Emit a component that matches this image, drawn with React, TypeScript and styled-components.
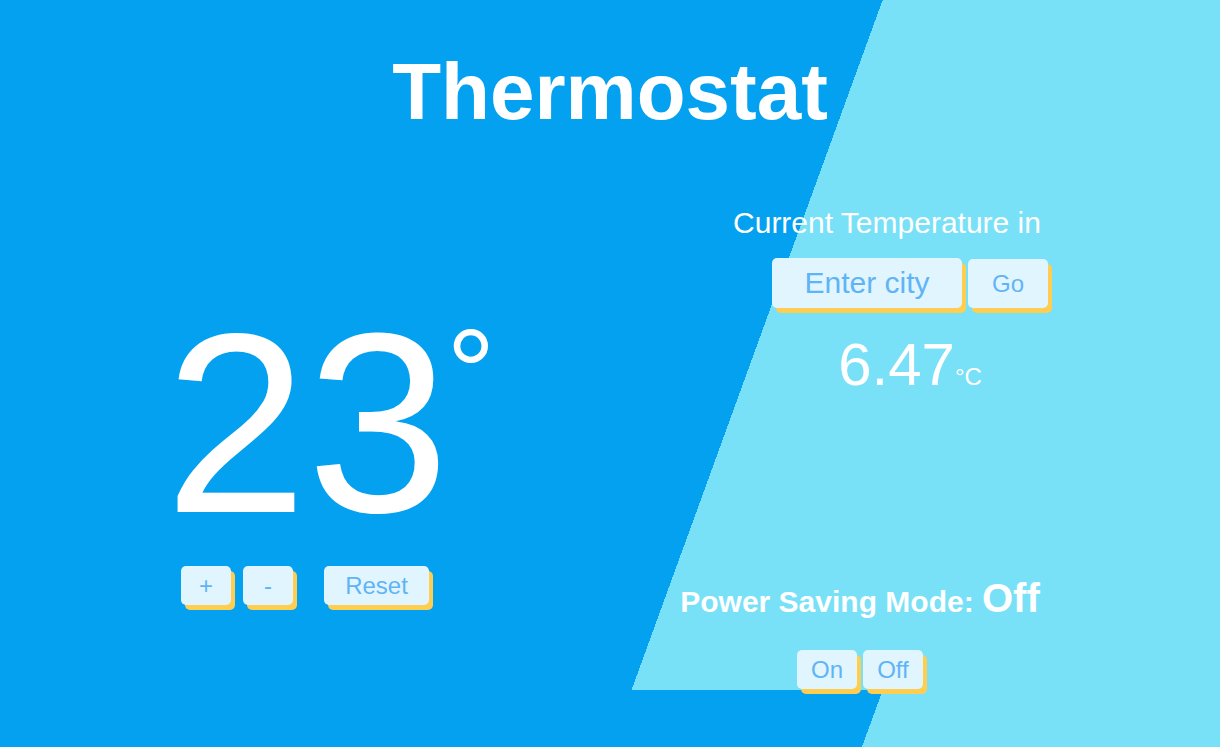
import React from "react";
import styled, { createGlobalStyle } from "styled-components";

const GlobalStyle = createGlobalStyle`
  html, body, #root {
    margin: 0;
    padding: 0;
    height: 100%;
  }
  body {
    font-family: "Liberation Sans", Arial, sans-serif;
  }
`;

const BLUE = "#03a1ef";
const CYAN = "#78e1f7";
const BTN_BG = "#e1f5fe";
const BTN_TEXT = "#5fb4f7";
const SHADOW = "#ffcd50";

const Page = styled.div`
  min-height: 100vh;
  background: linear-gradient(110deg, ${BLUE} 76%, ${CYAN} 76%);
`;

const Panel = styled.main`
  height: 690px;
  display: flex;
  flex-direction: column;
  color: #fff;
  background: linear-gradient(110deg, ${BLUE} 60%, ${CYAN} 60%);
`;

const Title = styled.h1`
  margin: 52px 0 0;
  font-size: 80px;
  line-height: 1;
  font-weight: 700;
  text-align: center;
`;

const Columns = styled.div`
  flex: 1;
  display: grid;
  grid-template-columns: 1fr 1fr;
`;

const LeftCol = styled.section`
  display: flex;
  flex-direction: column;
  align-items: center;
  padding-top: 163px;
`;

const RightCol = styled.section`
  display: flex;
  flex-direction: column;
  padding-top: 76px;
`;

const SetPoint = styled.div`
  font-size: 256px;
  line-height: 1;
  white-space: nowrap;
  padding-left: 4px;
`;

const Degree = styled.span`
  font-size: 122px;
  vertical-align: 97px;
  margin-left: -3px;
  margin-right: calc(-0.4em + 3px);
`;

const Controls = styled.div`
  margin-top: 15px;
  display: flex;
  gap: 31px;
`;

const StepGroup = styled.div`
  display: flex;
  gap: 12px;
`;

const Button = styled.button<{ $w: number; $h?: number }>`
  width: ${(p) => p.$w}px;
  height: ${(p) => p.$h ?? 39}px;
  padding: 0;
  border: none;
  border-radius: 5px;
  background: ${BTN_BG};
  color: ${BTN_TEXT};
  font: 24px "Liberation Sans", Arial, sans-serif;
  box-shadow: 4px 5px 0 ${SHADOW};
  cursor: pointer;
`;

const Label = styled.div<{ $shift: number }>`
  padding-right: ${(p) => p.$shift}px;
  text-align: center;
  font-size: 30px;
  line-height: 1;
`;

const CityRow = styled.form<{ $shift: number }>`
  margin: 20px 0 0;
  padding-right: ${(p) => p.$shift}px;
  display: flex;
  justify-content: center;
  align-items: flex-end;
  gap: 6px;
`;

const CityInput = styled.input`
  width: 190px;
  height: 50px;
  box-sizing: border-box;
  padding: 0;
  border: none;
  border-radius: 5px;
  background: ${BTN_BG};
  color: ${BTN_TEXT};
  font: 30px "Liberation Sans", Arial, sans-serif;
  text-align: center;
  box-shadow: 4px 5px 0 ${SHADOW};
  outline: none;
  &::placeholder {
    color: ${BTN_TEXT};
    opacity: 1;
  }
`;

const Reading = styled.div<{ $shift: number }>`
  margin-top: 27px;
  padding-right: ${(p) => p.$shift}px;
  text-align: center;
  font-size: 60px;
  line-height: 1;
`;

const Unit = styled.span`
  font-size: 24px;
`;

const PowerLine = styled.div<{ $shift: number }>`
  margin-top: 183px;
  padding-right: ${(p) => p.$shift}px;
  text-align: center;
  font-size: 30px;
  font-weight: 700;
  line-height: 40px;
`;

const PowerState = styled.span`
  font-size: 40px;
`;

const ToggleRow = styled.div<{ $shift: number }>`
  margin-top: 28px;
  padding-right: ${(p) => p.$shift}px;
  display: flex;
  justify-content: center;
  gap: 6px;
`;

export default function App() {
  return (
    <>
      <GlobalStyle />
      <Page>
        <Panel>
          <Title>Thermostat</Title>
          <Columns>
            <LeftCol>
              <SetPoint>
                23<Degree>°</Degree>
              </SetPoint>
              <Controls>
                <StepGroup>
                  <Button $w={50}>+</Button>
                  <Button $w={50}>-</Button>
                </StepGroup>
                <Button $w={105}>Reset</Button>
              </Controls>
            </LeftCol>
            <RightCol>
              <Label $shift={56}>Current Temperature in</Label>
              <CityRow $shift={10} onSubmit={(e) => e.preventDefault()}>
                <CityInput placeholder="Enter city" />
                <Button $w={80} $h={49} type="submit">
                  Go
                </Button>
              </CityRow>
              <Reading $shift={10}>
                6.47<Unit>°C</Unit>
              </Reading>
              <PowerLine $shift={110}>
                Power Saving Mode: <PowerState>Off</PowerState>
              </PowerLine>
              <ToggleRow $shift={110}>
                <Button $w={60}>On</Button>
                <Button $w={60}>Off</Button>
              </ToggleRow>
            </RightCol>
          </Columns>
        </Panel>
      </Page>
    </>
  );
}
